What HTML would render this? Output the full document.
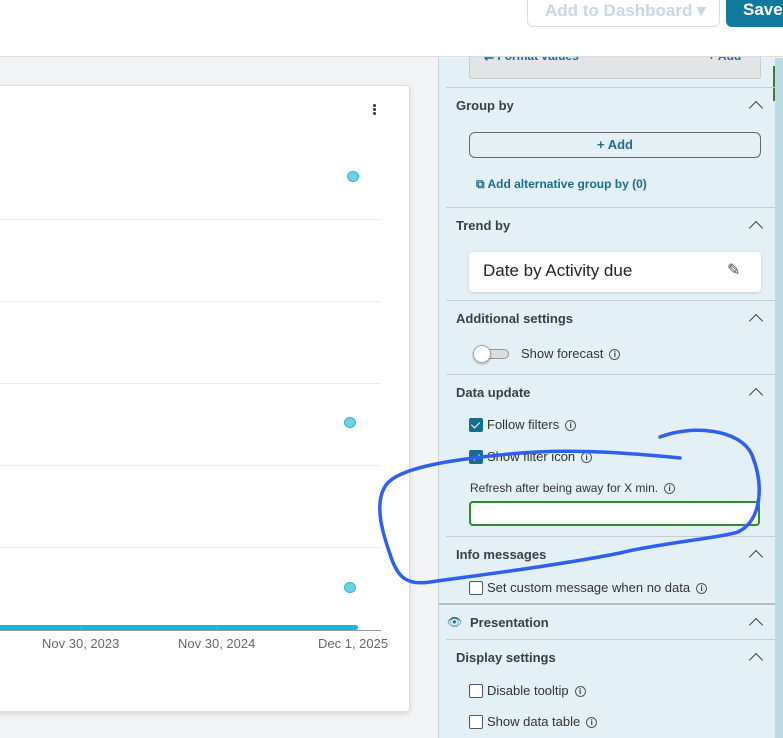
<!DOCTYPE html>
<html><head><style>
*{margin:0;padding:0;box-sizing:border-box}
body{width:783px;height:738px;overflow:hidden;background:#f3f4f6;font-family:"Liberation Sans",sans-serif;position:relative;color:#333}
.a{position:absolute}
.top{left:0;top:0;width:783px;height:57px;background:#fff;border-bottom:1px solid #dcdcdc}
.card{left:-5px;top:85px;width:415px;height:627px;background:#fff;border:1px solid #ddd;border-radius:4px;box-shadow:0 2px 6px rgba(0,0,0,.12)}
.grid{left:0;width:380px;height:1px;background:#ececec}
.dot{width:12px;height:11px;border-radius:50%;background:#6fd0e6;border:1px solid #28b8d8}
.xl{font-size:13px;color:#666;top:636px}
.panel{left:438px;top:58px;width:337px;height:680px;background:#e3f0f5;border-left:1px solid #c8d4d8}
.sb{left:775px;top:58px;width:8px;height:680px;background:#b9dde6}
.hd{left:456px;font-size:13px;font-weight:bold;color:#3a3f44}
.sep{left:446px;width:329px;height:1px;background:#c4ccd0}
.chev{left:751px;width:10px;height:10px;border-left:1.3px solid #444;border-top:1.3px solid #444;transform:rotate(45deg)}
.lbl{font-size:13px;color:#333}
.cb{width:14px;height:14px;border:1px solid #555;border-radius:2px;background:#fff}
.cbc{background:#126f8f;border-color:#126f8f}
.cbc:after{content:"";position:absolute;left:3px;top:1px;width:4px;height:7px;border-right:1.3px solid #fff;border-bottom:1.3px solid #fff;transform:rotate(45deg)}
.i{display:inline-block;width:11px;height:11px;border:1px solid #555;border-radius:50%;font-size:8px;line-height:9px;text-align:center;margin-left:6px;vertical-align:1px;font-weight:bold}
</style></head><body>
<div class="a card"></div>
<div class="a" style="left:373px;top:104px;width:3px;height:3px;background:#333;border-radius:50%;box-shadow:0 4px 0 #333,0 8px 0 #333"></div>
<div class="a grid" style="top:219px"></div>
<div class="a grid" style="top:301px"></div>
<div class="a grid" style="top:383px"></div>
<div class="a grid" style="top:465px"></div>
<div class="a grid" style="top:547px"></div>
<div class="a dot" style="left:347px;top:171px"></div>
<div class="a dot" style="left:344px;top:417px"></div>
<div class="a dot" style="left:344px;top:582px"></div>
<div class="a" style="left:0;top:625px;width:358px;height:5px;background:#12b6dc;border-radius:0 3px 3px 0"></div>
<div class="a" style="left:0;top:630px;width:381px;height:1px;background:#999"></div>
<div class="a" style="left:81px;top:626px;width:1px;height:5px;background:#999"></div>
<div class="a" style="left:217px;top:626px;width:1px;height:5px;background:#999"></div>
<div class="a" style="left:353px;top:626px;width:1px;height:5px;background:#999"></div>
<div class="a xl" style="left:42px">Nov 30, 2023</div>
<div class="a xl" style="left:178px">Nov 30, 2024</div>
<div class="a xl" style="left:318px">Dec 1, 2025</div>

<div class="a panel"></div>
<div class="a sb"></div>
<div class="a" style="left:773px;top:66px;width:2px;height:35px;background:#3a7a3a"></div>
<div class="a" style="left:469px;top:40px;width:292px;height:39px;background:#e2e4e6;border:1px solid #c9cccf;border-radius:0 0 3px 3px"></div>
<div class="a" style="left:484px;top:49px;font-size:12px;font-weight:bold;color:#1a6e8a">⇇ Format values</div>
<div class="a" style="left:708px;top:49px;font-size:12px;font-weight:bold;color:#1a6e8a">+ Add</div>
<div class="a top"></div>
<div class="a" style="left:527px;top:-10px;width:193px;height:37px;border:1px solid #d8dde0;border-radius:6px;background:#fff;color:#c9d7df;font-size:17px;font-weight:bold;padding:10px 0 0 17px">Add to Dashboard ▾</div>
<div class="a" style="left:726px;top:-10px;width:70px;height:37px;border-radius:6px;background:#117a9c;color:#fff;font-size:17px;font-weight:bold;padding:10px 0 0 17px">Save</div>

<div class="a sep" style="top:87px"></div>
<div class="a hd" style="top:98px">Group by</div><div class="a chev" style="top:103px"></div>
<div class="a" style="left:469px;top:132px;width:292px;height:26px;border:1px solid #666;border-radius:6px;text-align:center;font-size:13px;font-weight:bold;color:#1a6e8a;line-height:24px">+ Add</div>
<div class="a" style="left:476px;top:177px;font-size:12px;font-weight:bold;color:#1a6e8a">⧉ Add alternative group by (0)</div>
<div class="a sep" style="top:207px"></div>
<div class="a hd" style="top:218px">Trend by</div><div class="a chev" style="top:223px"></div>
<div class="a" style="left:469px;top:252px;width:292px;height:40px;background:#fff;border-radius:4px;box-shadow:0 1px 3px rgba(0,0,0,.15);font-size:17px;color:#222;padding:9px 0 0 14px">Date by Activity due<span class="a" style="left:258px;top:8px;font-size:16px;color:#444">✎</span></div>
<div class="a sep" style="top:300px"></div>
<div class="a hd" style="top:311px">Additional settings</div><div class="a chev" style="top:316px"></div>
<div class="a" style="left:476px;top:349px;width:33px;height:10px;border-radius:5px;background:#ddd;border:1px solid #999"></div>
<div class="a" style="left:473px;top:345px;width:18px;height:18px;border-radius:50%;background:#fff;border:1px solid #aaa;box-shadow:0 1px 2px rgba(0,0,0,.3)"></div>
<div class="a lbl" style="left:521px;top:346px">Show forecast<span class="i">i</span></div>
<div class="a sep" style="top:374px"></div>
<div class="a hd" style="top:385px">Data update</div><div class="a chev" style="top:390px"></div>
<div class="a cb cbc" style="left:469px;top:418px"></div><div class="a lbl" style="left:487px;top:417px">Follow filters<span class="i">i</span></div>
<div class="a cb cbc" style="left:469px;top:450px"></div><div class="a lbl" style="left:487px;top:449px">Show filter icon<span class="i">i</span></div>
<div class="a" style="left:470px;top:481px;font-size:12px;color:#333">Refresh after being away for X min.<span class="i">i</span></div>
<div class="a" style="left:469px;top:501px;width:291px;height:25px;background:#fff;border:2px solid #2e8b2e;border-radius:4px"></div>
<div class="a sep" style="top:536px"></div>
<div class="a hd" style="top:547px">Info messages</div><div class="a chev" style="top:552px"></div>
<div class="a cb" style="left:469px;top:581px"></div><div class="a lbl" style="left:487px;top:580px">Set custom message when no data<span class="i">i</span></div>
<div class="a" style="left:439px;top:603px;width:336px;height:2px;background:#b8c0c4"></div>
<div class="a" style="left:447px;top:615px;font-size:12px;color:#1a6e8a">👁</div>
<div class="a hd" style="left:470px;top:615px">Presentation</div><div class="a chev" style="top:620px"></div>
<div class="a sep" style="top:639px"></div>
<div class="a hd" style="top:650px">Display settings</div><div class="a chev" style="top:655px"></div>
<div class="a cb" style="left:469px;top:684px"></div><div class="a lbl" style="left:487px;top:683px">Disable tooltip<span class="i">i</span></div>
<div class="a cb" style="left:469px;top:715px"></div><div class="a lbl" style="left:487px;top:714px">Show data table<span class="i">i</span></div>

<svg class="a" style="left:0;top:0" width="783" height="738"><path d="M660 437 C690 425,740 428,752 455 C764 485,762 520,738 532 C720 538,660 543,620 553 C560 565,480 575,430 582 C405 586,398 575,392 560 C385 540,372 505,386 485 C398 468,450 460,500 455 C560 448,620 452,680 458" fill="none" stroke="#2f5ff0" stroke-width="3.5" stroke-linecap="round"/></svg>
</body></html>
